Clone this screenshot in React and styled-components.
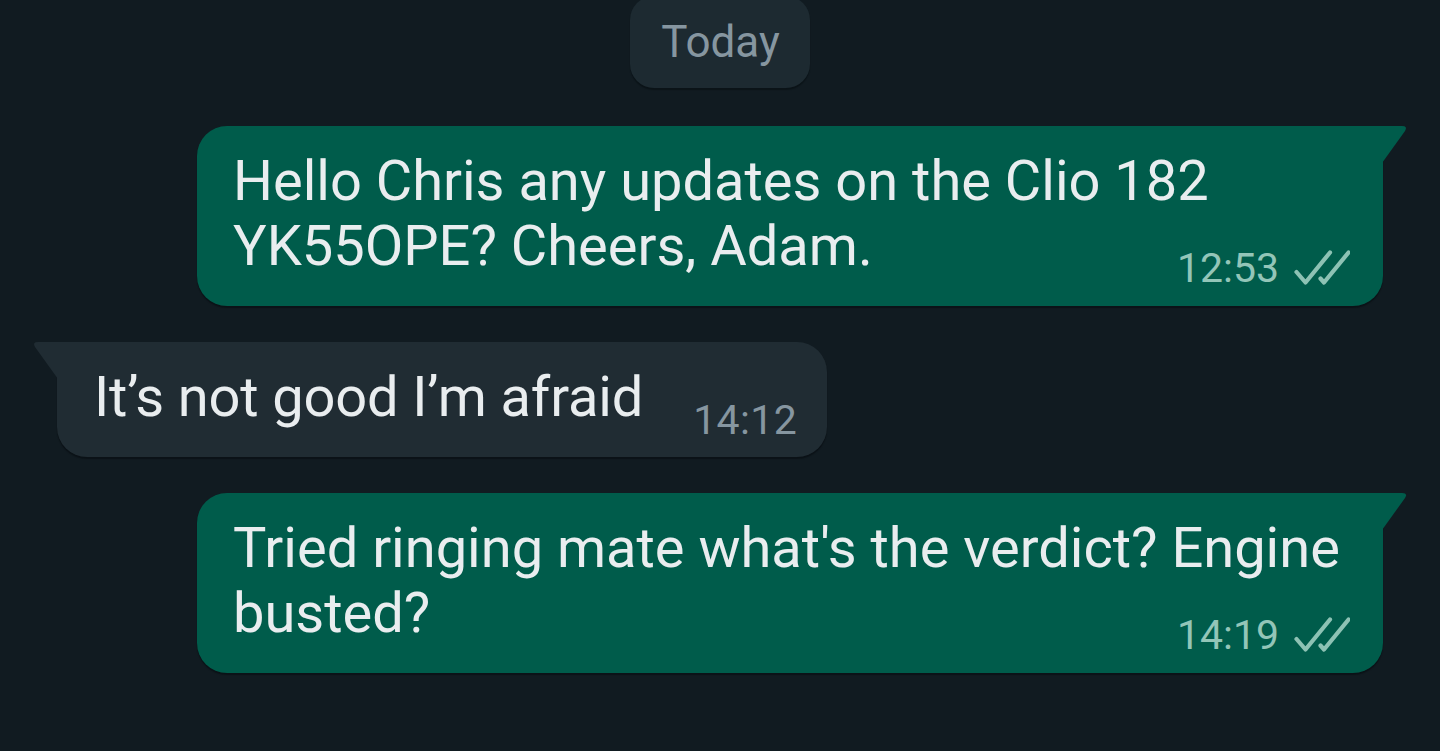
import React from "react";
import styled, { createGlobalStyle } from "styled-components";

const Global = createGlobalStyle`
  html, body { margin: 0; padding: 0; background: #111b21; }
  body { font-family: Roboto, "Noto Sans", "Liberation Sans", sans-serif; overflow: hidden; }
  * { box-sizing: border-box; }
`;

const Page = styled.div`
  width: 1440px;
  height: 751px;
  overflow: hidden;
  background: #111b21;
  display: flex;
  flex-direction: column;
  padding: 0 32px;
`;

const DateRow = styled.div`
  display: flex;
  justify-content: center;
  margin-top: -4px;
  margin-bottom: 38px;
`;

const DatePill = styled.div`
  background: #1d2a31;
  color: #8696a0;
  font-size: 44px;
  line-height: 52px;
  padding: 20px 30px 20px 31px;
  border-radius: 24px;
  box-shadow: 0 2px 1px rgba(5, 10, 13, 0.45);
`;

const Row = styled.div`
  display: flex;
  justify-content: ${(p) => (p.$out ? "flex-end" : "flex-start")};
  padding: ${(p) => (p.$out ? "0 25px 0 0" : "0 0 0 25px")};
  margin-bottom: 36px;
`;

const Bubble = styled.div`
  position: relative;
  max-width: 1186px;
  background: ${(p) => (p.$out ? "#005c4b" : "#202c33")};
  color: #e9edef;
  border-radius: ${(p) => (p.$out ? "30px 0 30px 30px" : "0 30px 30px 30px")};
  box-shadow: 0 2px 1px rgba(5, 10, 13, 0.5);
  display: flex;
  flex-direction: ${(p) => (p.$out ? "column" : "row")};
  align-items: flex-end;
  padding: ${(p) => (p.$out ? "23px 33px 14px 36px" : "23px 30px 13px 37px")};
`;

const Tail = styled.svg`
  position: absolute;
  top: 0;
  ${(p) => (p.$out ? "right: -25px;" : "left: -25px;")}
  width: 26px;
  height: 38px;
  display: block;
`;

const Text = styled.div`
  font-size: 56px;
  line-height: 65px;
  align-self: stretch;
  margin-bottom: ${(p) => (p.$inline ? "14px" : "0")};
  letter-spacing: ${(p) => (p.$inline ? "-0.15px" : "0")};
  white-space: pre-wrap;
`;

const Meta = styled.div`
  display: flex;
  align-items: center;
  gap: 15px;
  font-size: 41px;
  line-height: 48px;
  color: ${(p) => (p.$out ? "#93c5b8" : "#8696a0")};
  margin-top: ${(p) => (p.$out ? "-35px" : "0")};
  margin-left: ${(p) => (p.$out ? "0" : "50px")};
  letter-spacing: ${(p) => (p.$out ? "0" : "0.4px")};
  flex-shrink: 0;
`;

const Checks = () => (
  <svg width="56" height="35" viewBox="0 0 56 35" style={{ display: "block", marginTop: "-2px" }}>
    <g fill="none" stroke="#8dc2b4" strokeWidth="4.2" strokeLinecap="round" strokeLinejoin="round">
      <path d="M2.5 22 L11.5 32.5 L36 2.5" />
      <path d="M26.5 28.5 L30 32.5 L54.5 2.5" />
    </g>
  </svg>
);

const OutTail = () => (
  <Tail $out viewBox="0 0 26 38">
    <path d="M0 0 H20 Q26 0 23 5 L0 37 Z" fill="#005c4b" />
  </Tail>
);

const InTail = () => (
  <Tail viewBox="0 0 26 38">
    <path d="M26 0 H6 Q0 0 3 5 L26 37 Z" fill="#202c33" />
  </Tail>
);

const messages = [
  { out: true, text: "Hello Chris any updates on the Clio 182 YK55OPE? Cheers, Adam.", time: "12:53" },
  { out: false, text: "It’s not good I’m afraid", time: "14:12" },
  { out: true, text: "Tried ringing mate what's the verdict? Engine busted?", time: "14:19" },
];

export default function App() {
  return (
    <>
      <Global />
      <Page>
        <DateRow>
          <DatePill>Today</DatePill>
        </DateRow>
        {messages.map((m, i) => (
          <Row key={i} $out={m.out}>
            <Bubble $out={m.out}>
              {m.out ? <OutTail /> : <InTail />}
              <Text $inline={!m.out}>{m.text}</Text>
              <Meta $out={m.out}>
                <span>{m.time}</span>
                {m.out && <Checks />}
              </Meta>
            </Bubble>
          </Row>
        ))}
      </Page>
    </>
  );
}
